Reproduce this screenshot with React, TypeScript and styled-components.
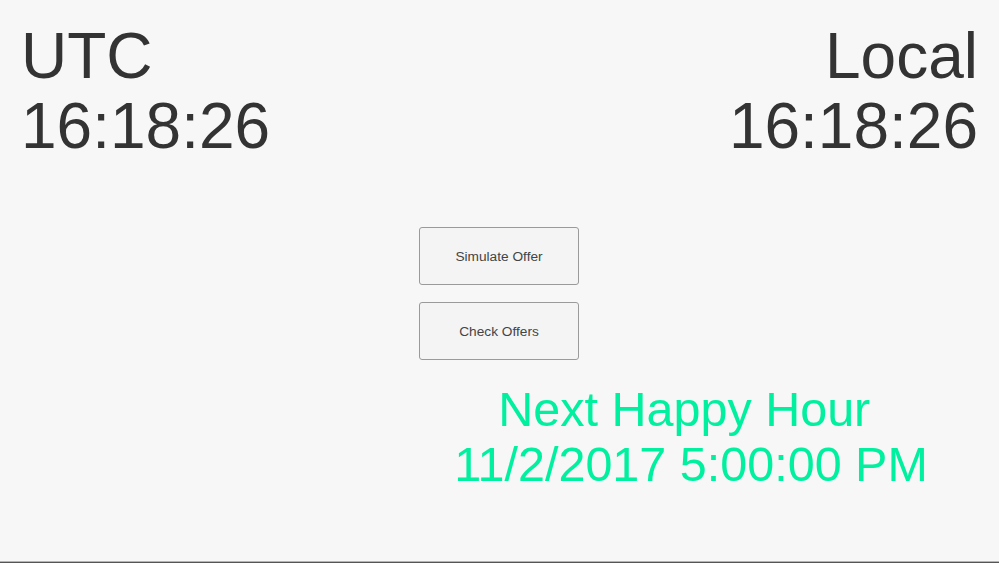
import styled, { createGlobalStyle } from "styled-components";

const GlobalStyle = createGlobalStyle`
  html, body {
    margin: 0;
    padding: 0;
    background: #f7f7f7;
  }
  body {
    font-family: "Liberation Sans", Arial, sans-serif;
  }
`;

const Page = styled.div`
  display: flex;
  flex-direction: column;
  height: 100vh;
  box-sizing: border-box;
  background: #f7f7f7;
`;

const Main = styled.div`
  flex: 1;
  display: flex;
  flex-direction: column;
`;

const Clocks = styled.div`
  display: flex;
  justify-content: space-between;
  padding: 21px 21px 0 21px;
`;

const Clock = styled.div<{ $align: "left" | "right" }>`
  font-size: 64px;
  line-height: 70px;
  color: #333;
  text-align: ${(p) => p.$align};
`;

const Actions = styled.div`
  display: flex;
  flex-direction: column;
  align-items: center;
  gap: 17px;
  margin-top: 66px;
  padding-right: 1px;
`;

const ActionButton = styled.button`
  width: 160px;
  height: 58px;
  box-sizing: border-box;
  border: 1px solid #9a9a9a;
  border-radius: 3px;
  background: #f4f4f4;
  color: #444;
  font-family: "Liberation Sans", Arial, sans-serif;
  font-size: 13.7px;
  cursor: pointer;
`;

const HappyHour = styled.div`
  margin-top: 22px;
  padding-left: 383px;
  text-align: center;
  font-size: 48.5px;
  line-height: 55px;
  color: #00f0a0;
`;

const BottomEdge = styled.div`
  height: 1px;
  border-top: 1px solid #b4b4b4;
  background: #555;
`;

const App = () => {
  return (
    <Page>
      <GlobalStyle />
      <Main>
        <Clocks>
          <Clock $align="left">
            UTC
            <br />
            16:18:26
          </Clock>
          <Clock $align="right">
            Local
            <br />
            16:18:26
          </Clock>
        </Clocks>
        <Actions>
          <ActionButton>Simulate Offer</ActionButton>
          <ActionButton>Check Offers</ActionButton>
        </Actions>
        <HappyHour>
          {"Next Happy Hour\u00a0"}
          <br />
          11/2/2017 5:00:00 PM
        </HappyHour>
      </Main>
      <BottomEdge />
    </Page>
  );
};

export default App;
